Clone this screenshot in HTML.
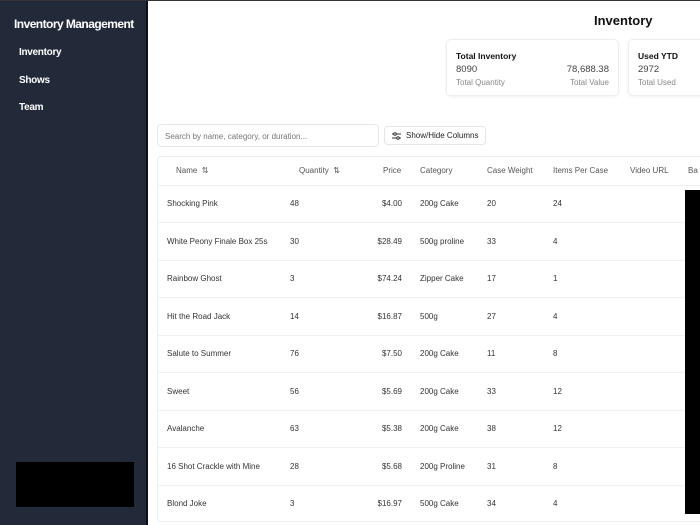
<!DOCTYPE html>
<html><head><style>
*{margin:0;padding:0;box-sizing:border-box}
html,body{width:700px;height:525px;overflow:hidden}
body{background:#fff;font-family:"Liberation Sans",sans-serif;position:relative}
.top{position:absolute;left:0;top:0;width:700px;height:1px;background:#333}
.side{position:absolute;left:0;top:1px;width:146px;height:524px;background:#222a3a}
.sideb{position:absolute;left:146px;top:1px;width:2px;height:524px;background:#0c111c}
.side h1{position:absolute;left:14px;top:16px;font-size:12px;color:#fff;font-weight:bold;letter-spacing:-0.55px}
.side a{position:absolute;left:19px;font-size:10px;color:#fff;font-weight:bold;letter-spacing:-0.3px}
.blk{position:absolute;left:16px;top:461px;width:118px;height:45px;background:#000}
.title{position:absolute;left:594px;top:13px;font-size:13px;font-weight:bold;color:#111}
.card{position:absolute;top:39px;height:57px;border:1px solid #eceef2;border-radius:5px;box-shadow:0 1px 3px rgba(0,0,0,.06);background:#fff}
.card b{position:absolute;left:9px;top:11px;font-size:8.5px;color:#111}
.card .v{position:absolute;top:24px;font-size:9.5px;color:#444}
.card .l{position:absolute;top:38px;font-size:8px;color:#888}
.search{position:absolute;left:157px;top:124px;width:222px;height:23px;border:1px solid #e6e8ec;border-radius:4px;font-size:8px;color:#777;padding:7px 7px}
.btn{position:absolute;left:384px;top:126px;width:102px;height:19px;border:1px solid #e3e5ea;border-radius:4px;font-size:8px;color:#222;padding:4px 0 0 21px}
.tbl{position:absolute;left:157px;top:156px;width:560px;height:366px;border:1px solid #eceef2;border-radius:4px}
.t{position:absolute;font-size:8px;color:#333;white-space:nowrap}
.h{color:#555;font-size:8px}
.ln{position:absolute;left:158px;width:542px;height:1px;background:#eef0f3}
.bar{position:absolute;left:685px;top:190px;width:15px;height:324px;background:#000}
</style></head><body>
<div class="top"></div>
<div class="side"><h1>Inventory Management</h1>
<a style="top:46px">Inventory</a><a style="top:74px">Shows</a><a style="top:101px">Team</a>
<div class="blk"></div></div>
<div class="sideb"></div>
<div class="title">Inventory</div>
<div class="card" style="left:446px;width:173px"><b>Total Inventory</b>
<span class="v" style="left:9px">8090</span><span class="v" style="right:9px">78,688.38</span>
<span class="l" style="left:9px">Total Quantity</span><span class="l" style="right:9px">Total Value</span></div>
<div class="card" style="left:628px;width:90px"><b>Used YTD</b>
<span class="v" style="left:9px">2972</span><span class="l" style="left:9px">Total Used</span></div>
<div class="search">Search by name, category, or duration...</div>
<div class="btn"><svg style="position:absolute;left:7px;top:5px" width="9" height="8" viewBox="0 0 9 8" stroke="#333" fill="none" stroke-width="1"><path d="M0 2H9M0 6H9"/><circle cx="3" cy="2" r="1.3" fill="#fff"/><circle cx="6" cy="6" r="1.3" fill="#fff"/></svg>Show/Hide Columns</div>
<div class="tbl"></div>
<div class="t h" style="left:176px;top:166px">Name &nbsp;⇅</div>
<div class="t h" style="left:299px;top:166px">Quantity &nbsp;⇅</div>
<div class="t h" style="left:383px;top:166px">Price</div>
<div class="t h" style="left:420px;top:166px">Category</div>
<div class="t h" style="left:487px;top:166px">Case Weight</div>
<div class="t h" style="left:553px;top:166px">Items Per Case</div>
<div class="t h" style="left:630px;top:166px">Video URL</div>
<div class="t h" style="left:688px;top:166px">Ba</div>
<div class="ln" style="top:185px"></div>
<div id="rows"></div>
<script>
var d=[["Shocking Pink",48,"$4.00","200g Cake",20,24],["White Peony Finale Box 25s",30,"$28.49","500g proline",33,4],["Rainbow Ghost",3,"$74.24","Zipper Cake",17,1],["Hit the Road Jack",14,"$16.87","500g",27,4],["Salute to Summer",76,"$7.50","200g Cake",11,8],["Sweet",56,"$5.69","200g Cake",33,12],["Avalanche",63,"$5.38","200g Cake",38,12],["16 Shot Crackle with Mine",28,"$5.68","200g Proline",31,8],["Blond Joke",3,"$16.97","500g Cake",34,4]];
var h="";d.forEach(function(r,i){var y=199+i*37.5;
h+='<div class="t" style="left:167px;top:'+y+'px">'+r[0]+'</div><div class="t" style="left:290px;top:'+y+'px">'+r[1]+'</div><div class="t" style="right:298px;top:'+y+'px">'+r[2]+'</div><div class="t" style="left:420px;top:'+y+'px">'+r[3]+'</div><div class="t" style="left:487px;top:'+y+'px">'+r[4]+'</div><div class="t" style="left:553px;top:'+y+'px">'+r[5]+'</div>'+(i<8?'<div class="ln" style="top:'+(y+23)+'px"></div>':'');});
document.getElementById("rows").innerHTML=h;
</script>
<div class="bar"></div>
</body></html>
